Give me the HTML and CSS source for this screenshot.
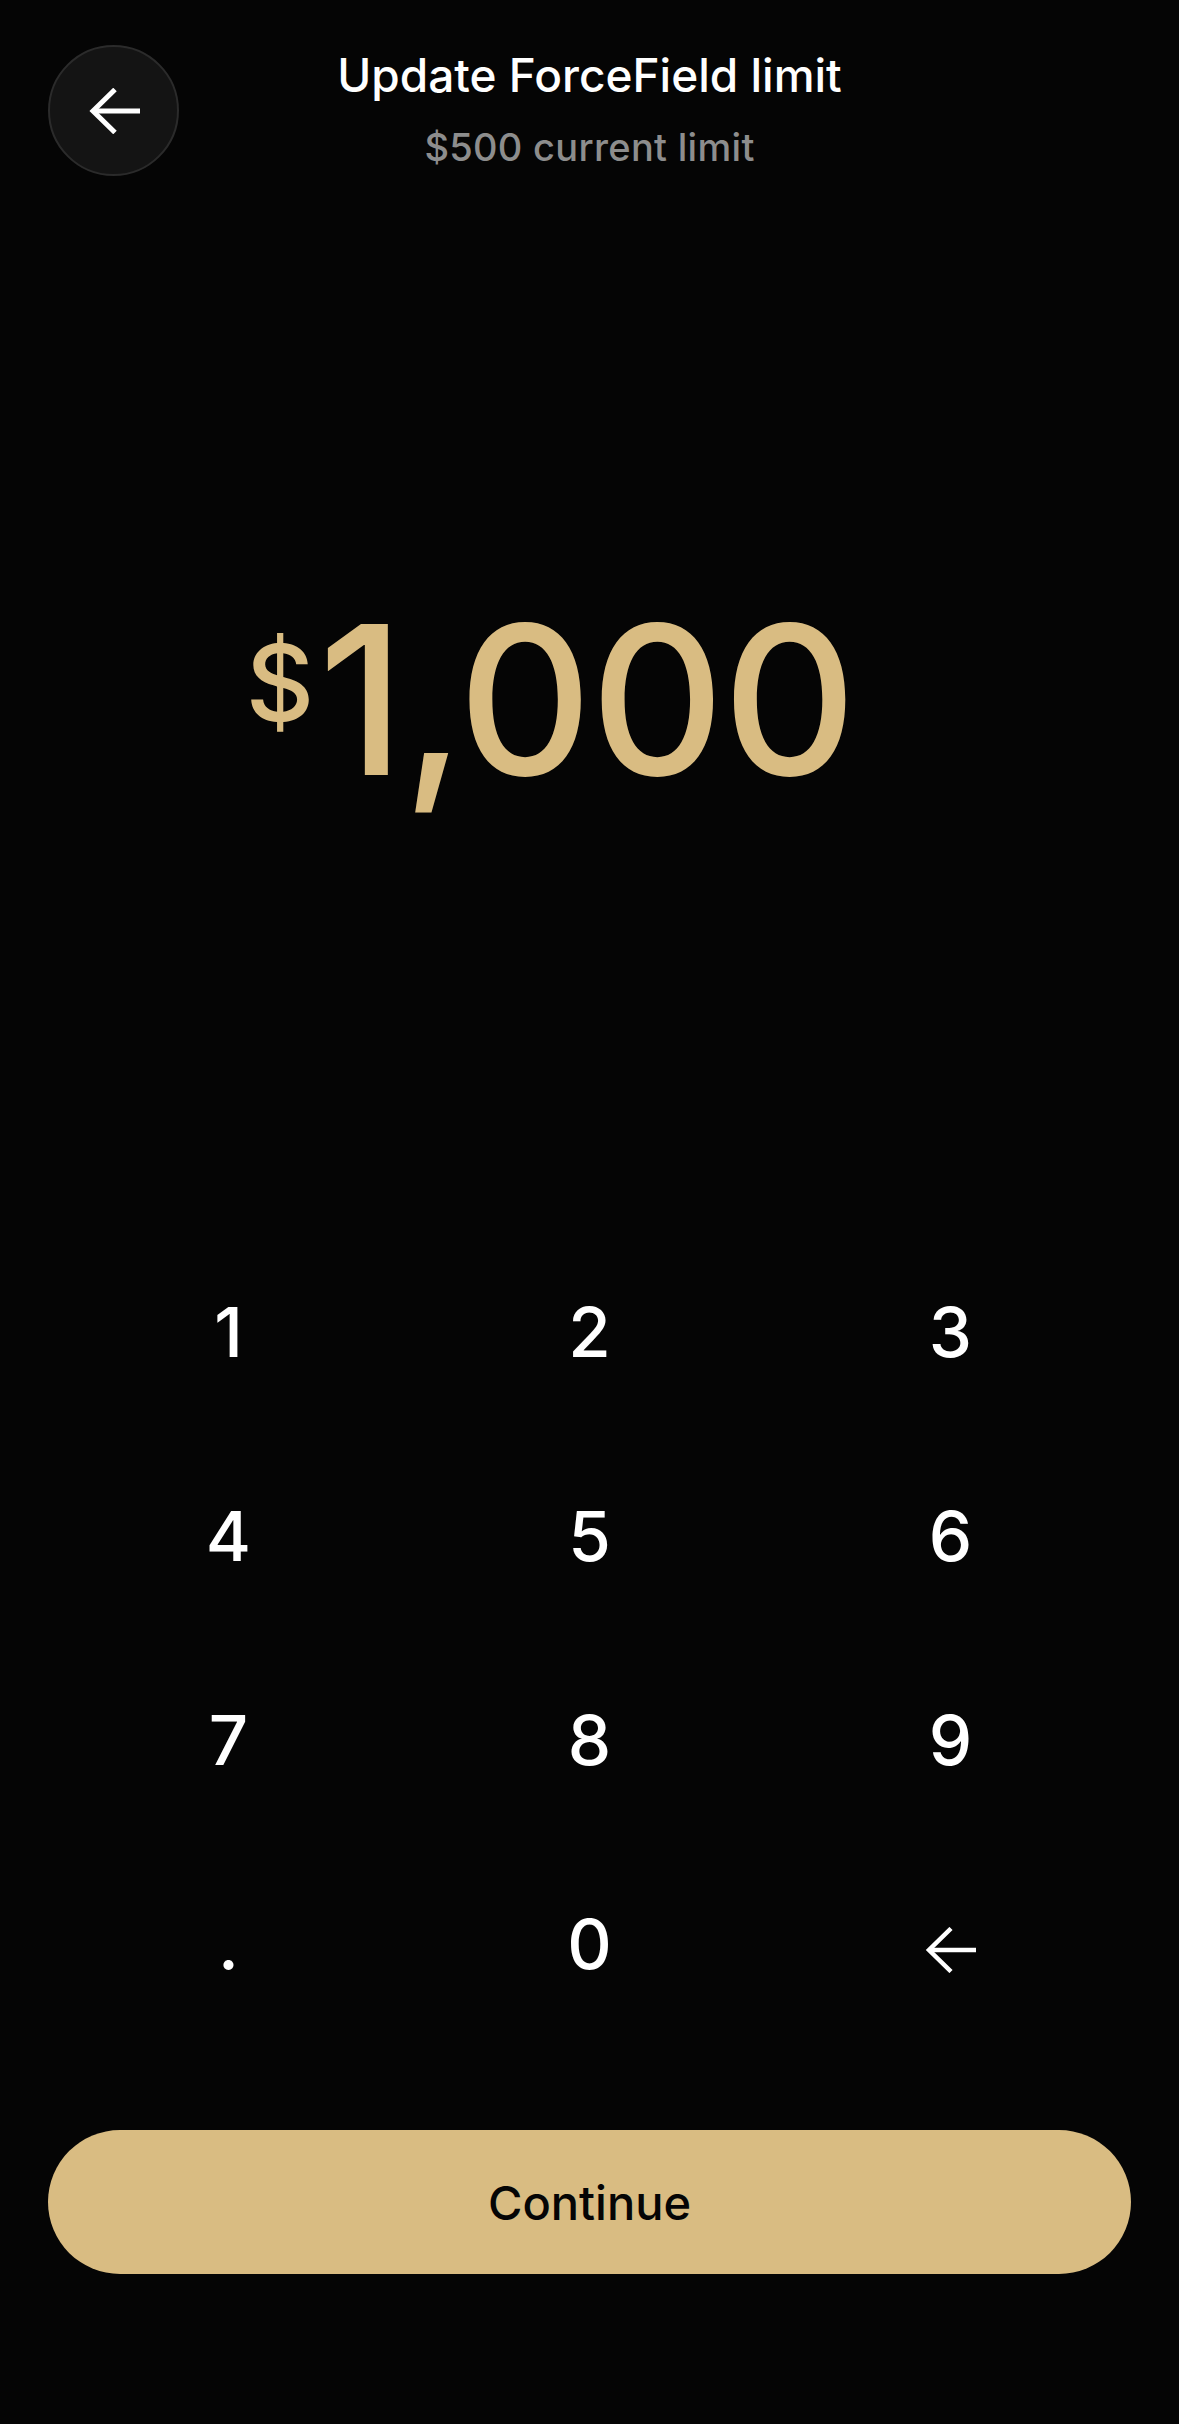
FILE: index.html
```html
<!DOCTYPE html>
<html lang="en">

<head>
    <meta charset="UTF-8">
    <meta name="viewport" content="width=device-width, initial-scale=1.0">
    <title>Update ForceField limit</title>
    <link rel="stylesheet" href="styles.css">
</head>

<body>
    <div class="screen">
        <header class="top-bar">
            <button class="back-button" aria-label="Back">
                <svg width="52" height="46" viewBox="0 0 52 46" fill="none" stroke="currentColor" stroke-width="5">
                    <path d="M51 23H4" />
                    <path d="M26 1.5L4 23l22 21.5" />
                </svg>
            </button>
            <div class="title-block">
                <h1 class="title">Update ForceField limit</h1>
                <p class="subtitle">$500 current limit</p>
            </div>
            <div></div>
        </header>

        <section class="amount">
            <div class="amount-value">
                <span class="currency">$</span>
                <span class="number">1,000</span>
            </div>
        </section>

        <div class="keypad">
            <button class="key">1</button>
            <button class="key">2</button>
            <button class="key">3</button>
            <button class="key">4</button>
            <button class="key">5</button>
            <button class="key">6</button>
            <button class="key">7</button>
            <button class="key">8</button>
            <button class="key">9</button>
            <button class="key">.</button>
            <button class="key">0</button>
            <button class="key" aria-label="Delete">
                <svg width="52" height="46" viewBox="0 0 52 46" fill="none" stroke="currentColor" stroke-width="4.5">
                    <path d="M51 23H4" />
                    <path d="M26 1.5L4 23l22 21.5" />
                </svg>
            </button>
        </div>

        <button class="continue-button">Continue</button>
    </div>
</body>

</html>
```

FILE: styles.css
```css
* {
    box-sizing: border-box;
}

body {
    margin: 0;
    background-color: #050505;
    color: #ffffff;
    font-family: "Inter", "Liberation Sans", sans-serif;
}

button {
    font-family: inherit;
    cursor: pointer;
}

.screen {
    display: flex;
    flex-direction: column;
    height: 2424px;
    padding: 45px 48px 150px;
}

.top-bar {
    display: grid;
    grid-template-columns: 131px 1fr 131px;
    height: 131px;
}

.back-button {
    width: 131px;
    height: 131px;
    border-radius: 50%;
    background-color: #141414;
    border: 2px solid #2b2b2b;
    color: #ffffff;
    display: flex;
    align-items: center;
    justify-content: center;
    padding: 0 0 0 2px;
}

.title-block {
    text-align: center;
    padding-top: 3px;
}

.title {
    margin: 0;
    font-size: 46px;
    line-height: 54px;
    font-weight: 500;
}

.subtitle {
    margin: 23px 0 0;
    font-size: 38px;
    line-height: 44px;
    letter-spacing: 0.3px;
    color: #8d8d8d;
    font-weight: 500;
}

.amount {
    flex: 1;
    display: flex;
    align-items: center;
    justify-content: center;
    padding: 0 6px 8px 0;
}

.amount-value {
    position: relative;
    color: #d9bc82;
    font-weight: 500;
    line-height: 1;
}

.number {
    display: block;
    font-size: 208px;
    letter-spacing: -2px;
}

.currency {
    position: absolute;
    right: 100%;
    top: 35px;
    margin-right: 4px;
    font-size: 106px;
}

.keypad {
    display: grid;
    grid-template-columns: repeat(3, 1fr);
    grid-auto-rows: 204px;
}

.key {
    background: none;
    border: none;
    color: #ffffff;
    font-size: 69px;
    font-weight: 500;
    line-height: 1;
    display: flex;
    align-items: center;
    justify-content: center;
    padding: 0;
}

.key svg {
    margin-top: 12px;
}

.continue-button {
    margin-top: 84px;
    height: 144px;
    border: none;
    border-radius: 72px;
    background-color: #d9bc82;
    color: #050505;
    font-size: 47px;
    font-weight: 500;
}
```
